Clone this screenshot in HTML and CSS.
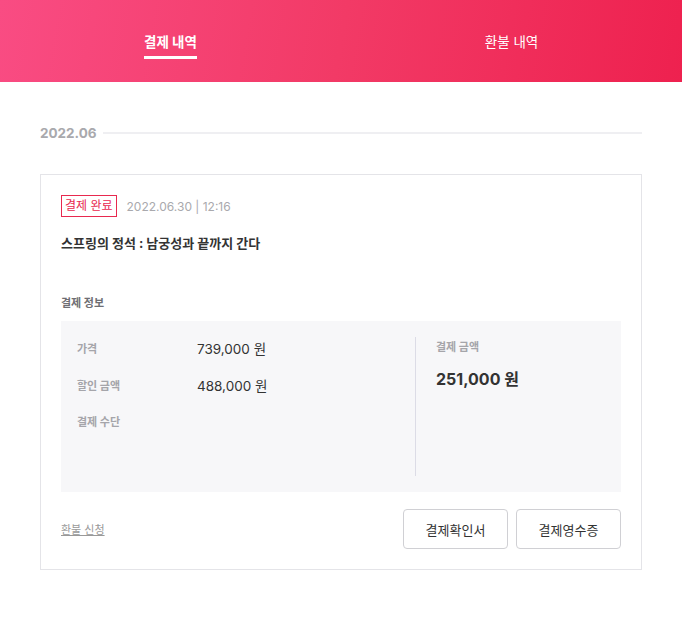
FILE: index.html
```html
<!DOCTYPE html>
<html lang="ko">
<head>
<meta charset="utf-8">
<link rel="stylesheet" href="styles.css">
</head>
<body>
<header class="tabs">
  <div class="tab"><span class="tab-label active">결제 내역</span></div>
  <div class="tab"><span class="tab-label">환불 내역</span></div>
</header>
<main class="content">
  <div class="month-row">
    <span class="month">2022.06</span>
    <span class="month-line"></span>
  </div>
  <section class="card">
    <div class="meta">
      <span class="badge">결제 완료</span>
      <span class="date">2022.06.30 | 12:16</span>
    </div>
    <h2 class="title">스프링의 정석 : 남궁성과 끝까지 간다</h2>
    <h3 class="info-title">결제 정보</h3>
    <div class="info-box">
      <div class="info-left">
        <div class="info-row"><span class="label">가격</span><span class="value">739,000 원</span></div>
        <div class="info-row"><span class="label">할인 금액</span><span class="value">488,000 원</span></div>
        <div class="info-row"><span class="label">결제 수단</span><span class="value"></span></div>
      </div>
      <div class="info-right">
        <span class="label">결제 금액</span>
        <span class="total">251,000 원</span>
      </div>
    </div>
    <div class="actions">
      <a class="refund">환불 신청</a>
      <div class="buttons">
        <button class="btn">결제확인서</button>
        <button class="btn">결제영수증</button>
      </div>
    </div>
  </section>
</main>
</body>
</html>
```
FILE: styles.css
```css
* { box-sizing: border-box; }
body {
  margin: 0;
  background: #fff;
  font-family: Inter, "Noto Sans CJK KR", "Noto Sans", sans-serif;
  color: #333;
}
.tabs {
  display: flex;
  height: 82px;
  padding-top: 32px;
  background: linear-gradient(100deg, #f94c83 0%, #f23a66 50%, #ee214f 100%);
}
.tab {
  flex: 1;
  display: flex;
  justify-content: center;
  align-items: flex-start;
}
.tab-label {
  color: #fff;
  font-size: 13.5px;
  line-height: 20px;
  font-weight: 400;
  padding-bottom: 4px;
  border-bottom: 3px solid transparent;
}
.tab-label.active {
  font-weight: 700;
  border-bottom-color: #fff;
}
.content {
  padding: 41px 40px 0;
}
.month-row {
  display: flex;
  align-items: center;
  gap: 6px;
}
.month {
  font-size: 13.5px;
  line-height: 20px;
  font-weight: 700;
  color: #a9a9ad;
}
.month-line {
  flex: 1;
  height: 2px;
  background: #efeff2;
}
.card {
  margin-top: 31px;
  border: 1px solid #e4e4e8;
  padding: 20px 20px 20px;
}
.meta {
  display: flex;
  align-items: center;
  gap: 10px;
}
.badge {
  display: inline-block;
  border: 1px solid #e8294f;
  color: #e8294f;
  font-size: 12px;
  line-height: 20px;
  padding: 0 3px;
}
.date {
  font-size: 12px;
  color: #a9a9ad;
}
.title {
  margin: 16px 0 0;
  font-size: 13px;
  line-height: 20px;
  font-weight: 700;
  color: #333;
}
.info-title {
  margin: 42px 0 0;
  font-size: 11px;
  line-height: 16px;
  font-weight: 700;
  color: #6e6e73;
}
.info-box {
  margin-top: 10px;
  background: #f7f7f9;
  padding: 16px 16px 16px;
  display: flex;
  height: 171px;
}
.info-left {
  width: 339px;
  border-right: 1px solid #dcdce6;
  display: flex;
  flex-direction: column;
  gap: 17px;
}
.info-row {
  display: grid;
  grid-template-columns: 120px auto;
  align-items: center;
  height: 20px;
}
.label {
  font-size: 11px;
  font-weight: 700;
  color: #a5a5aa;
}
.value {
  font-size: 13.5px;
  color: #333;
  padding-top: 1px;
}
.info-right {
  padding-left: 20px;
  display: flex;
  flex-direction: column;
}
.info-right .label {
  line-height: 20px;
}
.total {
  margin-top: 10px;
  font-size: 16px;
  line-height: 24px;
  font-weight: 700;
  color: #333;
}
.actions {
  margin-top: 17px;
  display: flex;
  justify-content: space-between;
  align-items: center;
}
.refund {
  font-size: 11px;
  color: #999;
  text-decoration: underline;
}
.buttons {
  display: flex;
  gap: 8px;
}
.btn {
  width: 105px;
  height: 40px;
  background: #fff;
  border: 1px solid #d0d0d4;
  border-radius: 4px;
  font-family: Inter, "Noto Sans CJK KR", sans-serif;
  font-size: 13px;
  color: #333;
}
```
